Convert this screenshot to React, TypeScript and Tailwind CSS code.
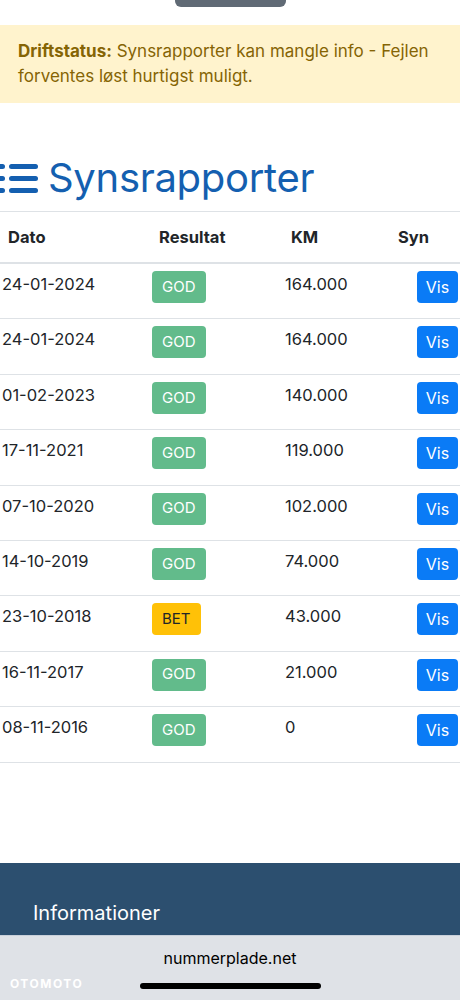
import React from "react";

const rows = [
  { date: "24-01-2024", result: "GOD", km: "164.000" },
  { date: "24-01-2024", result: "GOD", km: "164.000" },
  { date: "01-02-2023", result: "GOD", km: "140.000" },
  { date: "17-11-2021", result: "GOD", km: "119.000" },
  { date: "07-10-2020", result: "GOD", km: "102.000" },
  { date: "14-10-2019", result: "GOD", km: "74.000" },
  { date: "23-10-2018", result: "BET", km: "43.000" },
  { date: "16-11-2017", result: "GOD", km: "21.000" },
  { date: "08-11-2016", result: "GOD", km: "0" },
];

const ListIcon = () => (
  <svg width="38" height="34" viewBox="0 0 38 34" className="shrink-0">
    {/* bullets, cut off at the left edge */}
    <rect x="-3" y="3" width="8" height="5" rx="2.5" fill="#145fb0" />
    <rect x="-3" y="15" width="8" height="5" rx="2.5" fill="#145fb0" />
    <rect x="-3" y="27" width="8" height="5" rx="2.5" fill="#145fb0" />
    <rect x="9" y="3" width="29" height="5" rx="2.5" fill="#145fb0" />
    <rect x="9" y="15" width="29" height="5" rx="2.5" fill="#145fb0" />
    <rect x="9" y="27" width="29" height="5" rx="2.5" fill="#145fb0" />
  </svg>
);

export default function App() {
  return (
    <div className="relative flex h-[1000px] w-[460px] flex-col overflow-hidden bg-white font-['Inter','Liberation_Sans',sans-serif] text-[#212529]">
      {/* top pill */}
      <div className="mx-auto h-[7px] w-[111px] rounded-b-md bg-[#606a75]" />

      {/* Alert */}
      <p className="mt-[18px] bg-[#fff3cd] px-[18px] py-[14px] text-[17px] leading-[25px] text-[#856404]">
        <b className="font-bold">Driftstatus:</b> Synsrapporter kan mangle info - Fejlen forventes løst hurtigst muligt.
      </p>

      {/* Heading */}
      <div className="mt-[50px] mb-[8px] flex h-[50px] items-center gap-[10px]">
        <ListIcon />
        <h1 className="text-[40px] leading-[50px] tracking-[-0.3px] text-[#145fb0]">Synsrapporter</h1>
      </div>

      {/* Table */}
      <div className="border-t border-[#dee2e6]">
        <div className="flex h-[52px] items-center border-b-2 border-[#dee2e6] text-[16.5px] font-bold">
          <div className="w-[159px] pl-[8px]">Dato</div>
          <div className="w-[132px]">Resultat</div>
          <div className="w-[107px]">KM</div>
          <div>Syn</div>
        </div>
        {rows.map((r, i) => (
          <div key={i} className="flex h-[55.4px] items-start border-b border-[#dee2e6] pt-[7px] text-[16.5px]">
            <div className="w-[152px] pl-[2px] pt-[1px] leading-[24px]">{r.date}</div>
            <div className="w-[133px]">
              <span
                className={
                  r.result === "GOD"
                    ? "inline-flex h-[32px] items-center rounded-[4px] bg-[#62bb8b] px-[10px] text-[15px] text-white"
                    : "inline-flex h-[32px] items-center rounded-[4px] bg-[#ffc107] px-[10px] text-[15px] text-[#212529]"
                }
              >
                {r.result}
              </span>
            </div>
            <div className="w-[132px] pt-[1px] leading-[24px]">{r.km}</div>
            <button className="flex h-[32px] w-[41px] items-center justify-center rounded-[4px] bg-[#0a7bf6] text-[16px] text-white">
              Vis
            </button>
          </div>
        ))}
      </div>

      <div className="flex-1" />

      {/* Footer */}
      <div className="flex h-[72px] items-end bg-[#2c4f6f] px-[33px] pb-[8px]">
        <h2 className="text-[20px] leading-[28px] text-white">Informationer</h2>
      </div>

      {/* Browser bar */}
      <div className="flex h-[65px] flex-col items-center border-t border-[#c9d0da] bg-[#dfe2e7]">
        <div className="mt-[10px] text-[16px] leading-[24px] text-black">nummerplade.net</div>
        <div className="mt-[13px] h-[6px] w-[181px] rounded-full bg-black" />
      </div>

      {/* watermark */}
      <div className="absolute bottom-[7px] left-[10px] text-[12px] font-bold tracking-[1.5px] text-white">OTOMOTO</div>
    </div>
  );
}
